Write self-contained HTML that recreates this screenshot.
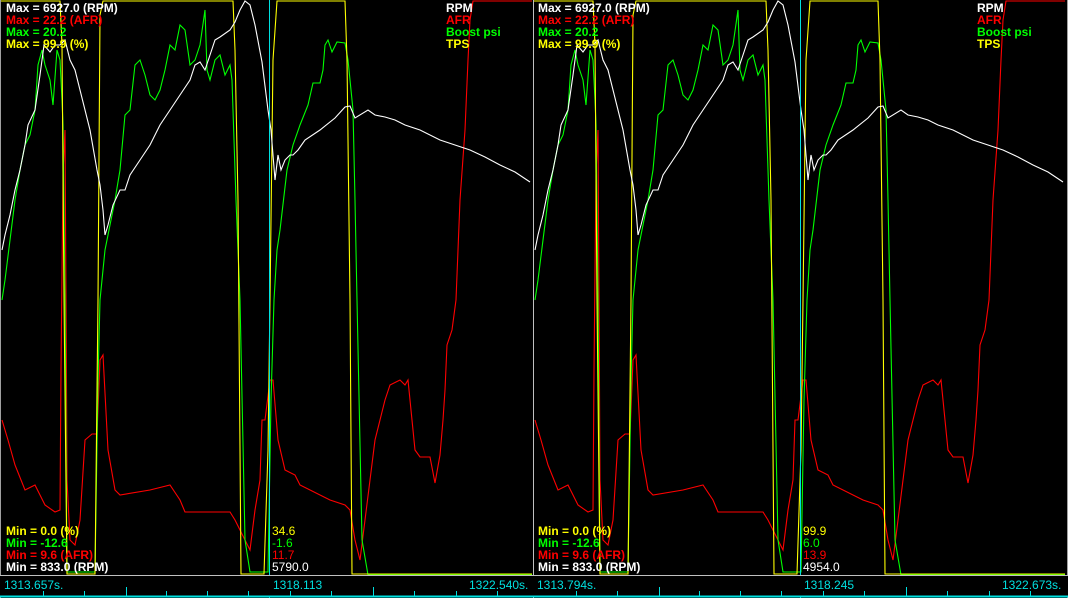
<!DOCTYPE html>
<html><head><meta charset="utf-8"><style>
html,body{margin:0;padding:0;background:#000;width:1068px;height:598px;overflow:hidden}
svg{display:block}
text{font-family:"Liberation Sans",Arial,sans-serif;font-size:12px}
.b{font-weight:bold}
</style></head><body>
<svg width="1068" height="598" viewBox="0 0 1068 598" xmlns="http://www.w3.org/2000/svg">
<rect width="1068" height="598" fill="#000"/>
<defs>
<clipPath id="c"><rect x="1" y="0" width="531" height="575"/></clipPath>
<g id="tr" fill="none" stroke-width="1.1">
<polyline stroke="#ff0000" points="2,420 8,440 15,465 25,490 35,485 45,505 55,512 60,510 61,370 63,175 65,130 66,300 67,480 70,540 75,545 80,520 85,440 92,434 97,434 100,360 103,355 108,450 115,490 120,495 150,490 170,485 180,500 185,512 230,512 235,520 245,540 250,550 255,510 260,480 262,420 265,420 270,380 273,380 278,440 285,470 295,475 300,485 330,500 345,505 350,510 355,540 360,560 365,520 375,440 385,400 390,385 400,380 405,385 408,380 415,450 420,457 430,457 435,483 440,455 443,420 445,390 447,345 452,330 456,300 460,200 465,130 468,60 470,20 473,1 532,1"/>
<polyline stroke="#00ff00" points="2,300 5,280 10,240 15,200 20,170 25,145 30,135 35,110 38,65 42,50 45,65 50,80 53,105 57,50 60,60 62,100 63,125 65,300 67,572 95,572 98,380 100,300 105,250 115,200 120,170 125,115 130,110 135,65 140,60 145,75 150,95 155,100 160,90 165,70 170,45 175,50 180,25 185,30 190,65 195,60 200,45 205,10 207,70 210,80 215,60 220,55 225,75 230,65 232,80 236,200 240,300 245,540 250,572 268,572 271,400 274,300 277,250 280,230 287,170 293,145 300,125 308,105 313,83 320,83 323,70 325,45 328,40 332,52 337,42 345,43 348,60 353,110 355,200 357,300 362,540 368,575 532,575"/>
<polyline stroke="#ffff00" points="1,1 60,1 62,45 64,300 67,574 95,574 98,300 100,15 103,1 233,1 235,50 238,200 241,574 264,574 268,450 270,300 273,60 277,1 345,1 347,60 350,300 352,574 532,574"/>
<polyline stroke="#ffffff" points="2,250 5,235 10,215 15,190 20,170 25,145 28,125 35,110 40,75 44,45 50,52 55,45 60,45 65,40 70,60 75,70 80,90 90,130 97,170 100,185 103,210 105,235 108,225 113,205 120,190 125,190 130,175 140,160 150,145 160,125 170,110 180,95 190,80 195,65 200,62 205,70 210,55 215,40 220,37 230,30 235,22 240,10 245,1 250,5 255,25 262,62 268,110 271,130 273,155 275,180 278,155 281,170 285,160 290,155 293,155 298,150 305,140 320,130 335,118 345,107 350,106 355,118 368,110 375,115 385,117 395,120 405,125 420,130 440,140 455,145 470,150 485,157 500,165 515,172 530,182"/>
</g>
</defs>
<g clip-path="url(#c)"><use href="#tr"/></g>
<g transform="translate(533,0)"><g clip-path="url(#c)"><use href="#tr"/></g></g>
<line x1="269.5" y1="0" x2="269.5" y2="598" stroke="#00e0e0"/>
<line x1="800.5" y1="0" x2="800.5" y2="598" stroke="#00e0e0"/>
<line x1="0.5" y1="0" x2="0.5" y2="598" stroke="#a0a0a0"/>
<line x1="533.5" y1="0" x2="533.5" y2="598" stroke="#c0c0c0"/>
<line x1="1067.5" y1="0" x2="1067.5" y2="598" stroke="#a0a0a0"/>
<line x1="0" y1="575.5" x2="1068" y2="575.5" stroke="#c0c0c0"/>
<rect x="0" y="576" width="1068" height="20" fill="#000"/>
<line x1="0" y1="596.5" x2="1068" y2="596.5" stroke="#00e0e0" stroke-width="2"/>
<g stroke="#00e0e0">
<path d="M43.5 591V596M84.5 591V596M126.5 587V596M166.5 591V596M207.5 591V596M248.5 591V596M290.5 591V596M331.5 591V596M373.5 587V596M414.5 591V596M456.5 591V596M497.5 591V596"/>
<path d="M576.5 591V596M617.5 591V596M659.5 587V596M699.5 591V596M740.5 591V596M781.5 591V596M823.5 591V596M864.5 591V596M906.5 587V596M947.5 591V596M989.5 591V596M1030.5 591V596"/>
</g>
<g class="b">
<text x="6" y="12" fill="#fff">Max = 6927.0 (RPM)</text>
<text x="6" y="24" fill="#ff0000">Max = 22.2 (AFR)</text>
<text x="6" y="36" fill="#00ff00">Max = 20.2</text>
<text x="6" y="48" fill="#ffff00">Max = 99.9 (%)</text>
<text x="446" y="12" fill="#fff">RPM</text>
<text x="446" y="24" fill="#ff0000">AFR</text>
<text x="446" y="36" fill="#00ff00">Boost psi</text>
<text x="446" y="48" fill="#ffff00">TPS</text>
<text x="6" y="535" fill="#ffff00">Min = 0.0 (%)</text>
<text x="6" y="547" fill="#00ff00">Min = -12.6</text>
<text x="6" y="559" fill="#ff0000">Min = 9.6 (AFR)</text>
<text x="6" y="571" fill="#fff">Min = 833.0 (RPM)</text>
<text x="538" y="12" fill="#fff">Max = 6927.0 (RPM)</text>
<text x="538" y="24" fill="#ff0000">Max = 22.2 (AFR)</text>
<text x="538" y="36" fill="#00ff00">Max = 20.2</text>
<text x="538" y="48" fill="#ffff00">Max = 99.9 (%)</text>
<text x="977" y="12" fill="#fff">RPM</text>
<text x="977" y="24" fill="#ff0000">AFR</text>
<text x="977" y="36" fill="#00ff00">Boost psi</text>
<text x="977" y="48" fill="#ffff00">TPS</text>
<text x="538" y="535" fill="#ffff00">Min = 0.0 (%)</text>
<text x="538" y="547" fill="#00ff00">Min = -12.6</text>
<text x="538" y="559" fill="#ff0000">Min = 9.6 (AFR)</text>
<text x="538" y="571" fill="#fff">Min = 833.0 (RPM)</text>
</g>
<text x="272" y="535" fill="#ffff00">34.6</text>
<text x="272" y="547" fill="#00ff00">-1.6</text>
<text x="272" y="559" fill="#ff0000">11.7</text>
<text x="272" y="571" fill="#fff">5790.0</text>
<text x="803" y="535" fill="#ffff00">99.9</text>
<text x="803" y="547" fill="#00ff00">6.0</text>
<text x="803" y="559" fill="#ff0000">13.9</text>
<text x="803" y="571" fill="#fff">4954.0</text>
<g fill="#00e0e0">
<text x="4" y="589">1313.657s.</text>
<text x="273" y="589">1318.113</text>
<text x="469" y="589">1322.540s.</text>
<text x="537" y="589">1313.794s.</text>
<text x="804" y="589">1318.245</text>
<text x="1002" y="589">1322.673s.</text>
</g>
</svg>
</body></html>
